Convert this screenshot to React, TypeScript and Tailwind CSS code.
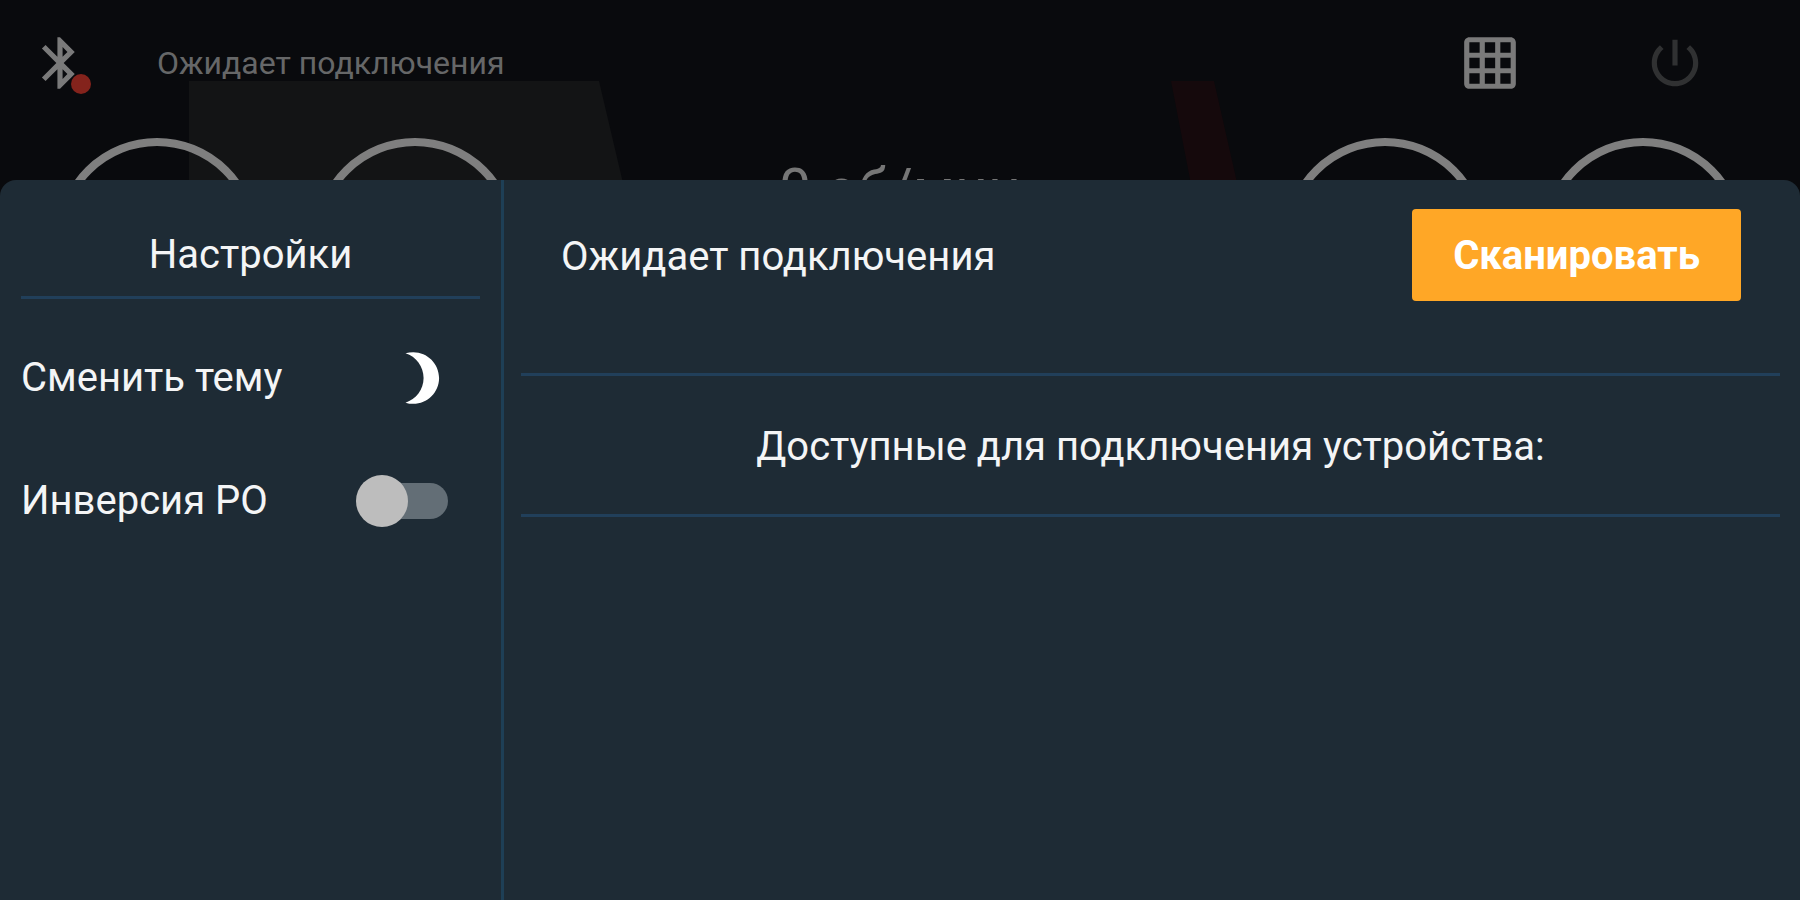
import { useState } from "react";

const iconPaths = {
  bluetooth:
    "M17.71 7.71L12 2h-1v7.59L6.41 5 5 6.41 10.59 12 5 17.59 6.41 19 11 14.41V22h1l5.71-5.71-4.3-4.29 4.3-4.29zM13 5.83l1.88 1.88L13 9.59V5.83zm1.88 10.46L13 18.17v-3.76l1.88 1.88z",
  grid: "M20 2H4c-1.1 0-2 .9-2 2v16c0 1.1.9 2 2 2h16c1.1 0 2-.9 2-2V4c0-1.1-.9-2-2-2zM8 20H4v-4h4v4zm0-6H4v-4h4v4zm0-6H4V4h4v4zm6 12h-4v-4h4v4zm0-6h-4v-4h4v4zm0-6h-4V4h4v4zm6 12h-4v-4h4v4zm0-6h-4v-4h4v4zm0-6h-4V4h4v4z",
  power:
    "M13 3h-2v10h2V3zm4.83 2.17l-1.42 1.42C17.99 7.86 19 9.81 19 12c0 3.87-3.13 7-7 7s-7-3.13-7-7c0-2.19 1.01-4.14 2.58-5.42L6.17 5.17C4.23 6.82 3 9.26 3 12c0 4.97 4.03 9 9 9s9-4.03 9-9c0-2.74-1.23-5.18-3.17-6.83z",
  moon: "M9 2c-1.05 0-2.05.16-3 .46 4.06 1.27 7 5.06 7 9.54 0 4.48-2.94 8.27-7 9.54.95.3 1.95.46 3 .46 5.52 0 10-4.48 10-10S14.52 2 9 2z",
};

function Icon({ name }: { name: keyof typeof iconPaths }) {
  return (
    <svg viewBox="0 0 24 24" className="size-[62px] fill-current" aria-hidden="true">
      <path d={iconPaths[name]} />
    </svg>
  );
}

function Gauge() {
  return <div className="size-[202px] shrink-0 rounded-full border-8 border-[#7f7f7f]" />;
}

export default function App() {
  const [inverted, setInverted] = useState(false);

  return (
    <div className="relative flex min-h-screen flex-col bg-[#090a0d] font-[Roboto,sans-serif] text-[40px] leading-12 text-[#f4f5f6]">
      {/* road scene behind the gauges */}
      <svg
        viewBox="0 0 1800 200"
        preserveAspectRatio="none"
        className="absolute inset-x-0 top-0 h-[200px] w-full"
        aria-hidden="true"
      >
        <path d="M189 81H599L627 200H189z" fill="#131415" />
        <path d="M1171 81H1214L1241 200H1194z" fill="#15090c" />
      </svg>

      <header className="relative flex h-[125px] items-center pr-[94px] pl-[29px] text-[#7a7a7a]">
        <button type="button" aria-label="Bluetooth" className="relative">
          <Icon name="bluetooth" />
          <span className="absolute right-0 bottom-0 size-5 rounded-full bg-[#84231c]" />
        </button>
        <p className="ml-[66px] text-[32px] text-[#666768]">Ожидает подключения</p>
        <button type="button" aria-label="Меню" className="ml-auto">
          <Icon name="grid" />
        </button>
        <button type="button" aria-label="Выключить" className="ml-[123px] text-[#303132]">
          <Icon name="power" />
        </button>
      </header>

      <div className="relative flex h-[55px] items-start justify-between overflow-hidden px-14 pt-[13px]">
        <div className="flex gap-14">
          <Gauge />
          <Gauge />
        </div>
        <p className="pt-4 text-[57px] leading-[72px] text-[#767676]">0 об/мин</p>
        <div className="flex gap-14">
          <Gauge />
          <Gauge />
        </div>
      </div>

      <main className="relative flex flex-1 overflow-hidden rounded-t-2xl bg-[#1e2b35]">
        <aside className="w-[28%] shrink-0 border-r-3 border-[#1e3f56] px-[21px]">
          <h1 className="border-b-3 border-[#213f5a] pt-[51px] pb-[17px] text-center">Настройки</h1>
          <div className="mt-12 flex h-[62px] items-center justify-between pr-7">
            <span>Сменить тему</span>
            <button type="button" aria-label="Сменить тему" className="text-white">
              <Icon name="moon" />
            </button>
          </div>
          <label className="mt-[61px] flex h-[62px] items-center justify-between pr-8">
            <span>Инверсия РО</span>
            <span className="relative flex h-[52px] w-[92px] items-center">
              <input
                type="checkbox"
                role="switch"
                checked={inverted}
                onChange={(e) => setInverted(e.target.checked)}
                className="peer ml-2 h-9 w-[84px] appearance-none rounded-full bg-[#636e76]"
              />
              <span className="absolute left-0 size-[52px] rounded-full bg-[#bdbdbd] peer-checked:left-10" />
            </span>
          </label>
        </aside>

        <section className="flex-1 pr-5 pl-[17px]">
          <div className="flex h-[196px] items-start justify-between border-b-3 border-[#213f5a] pt-[29px] pr-[39px] pl-10">
            <h2 className="pt-6">Ожидает подключения</h2>
            <button type="button" className="h-[92px] rounded bg-[#ffa726] px-[41px] pt-0.5 font-bold text-white">
              Сканировать
            </button>
          </div>
          <h3 className="border-b-3 border-[#213f5a] pt-[47px] pb-[43px] text-center">
            Доступные для подключения устройства:
          </h3>
        </section>
      </main>
    </div>
  );
}
